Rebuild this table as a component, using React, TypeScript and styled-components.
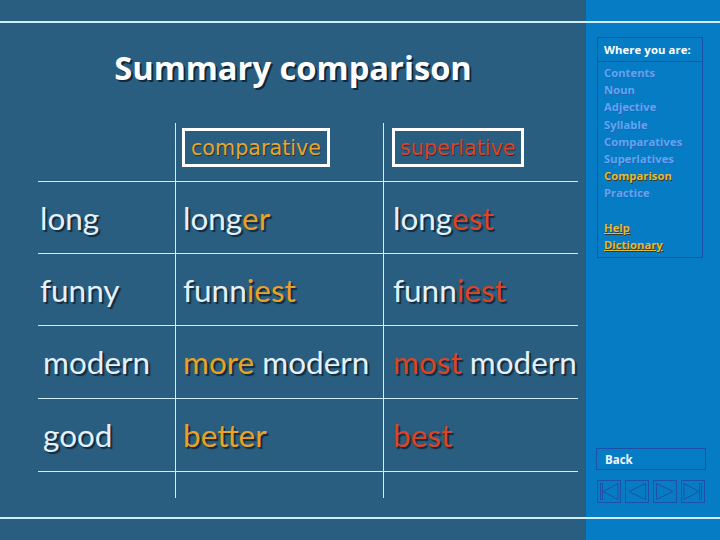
import React from "react";
import styled, { createGlobalStyle } from "styled-components";

const GlobalStyle = createGlobalStyle`
  html, body { margin: 0; padding: 0; background: #2a5e80; }
  body { font-family: "Open Sans", "DejaVu Sans", sans-serif; }
  * { box-sizing: border-box; }
`;

const LINE = "#cdeefa";

const Shell = styled.div`
  width: 720px;
  height: 540px;
  display: flex;
  overflow: hidden;
`;

const Column = styled.div<{ $side?: boolean }>`
  display: flex;
  flex-direction: column;
  width: ${(p) => (p.$side ? "134px" : "586px")};
  background: ${(p) => (p.$side ? "#067cc5" : "#2a5e80")};
`;

const Band = styled.div`
  height: 21px;
  flex: none;
`;

const Body = styled.div`
  height: 498px;
  flex: none;
  border-top: 2px solid ${LINE};
  border-bottom: 2px solid ${LINE};
  display: flex;
  flex-direction: column;
`;

const MainBody = styled(Body)`
  padding-left: 38px;
`;

const Title = styled.h1`
  margin: 25px 0 0 -38px;
  height: 40px;
  line-height: 40px;
  text-align: center;
  font-family: "Open Sans", sans-serif;
  font-weight: 700;
  font-size: 32.7px;
  color: #ffffff;
  text-shadow: 2px 2px 0 #10283a;
`;

const Table = styled.div`
  margin-top: 35px;
  display: grid;
  grid-template-columns: 137px 208px 195px;
  grid-template-rows: 58px 72px 72px 73px 73px 27px;
`;

const PAD = ["2px", "7px", "9px"];

const Cell = styled.div<{ $col: number; $ruled?: boolean; $indent?: number }>`
  display: flex;
  align-items: center;
  white-space: nowrap;
  padding-left: ${(p) => (p.$indent !== undefined ? `${p.$indent}px` : PAD[p.$col])};
  border-left: ${(p) => (p.$col > 0 ? `1px solid ${LINE}` : "none")};
  border-top: ${(p) => (p.$ruled ? `1px solid ${LINE}` : "none")};
  font-family: Lato, "Open Sans", sans-serif;
  font-size: 31.5px;
  color: #e4f1fa;
  text-shadow: 2px 2px 1px rgba(12, 30, 45, 0.8);
`;

const HeadCell = styled.div<{ $col: number }>`
  padding: 5px 0 0 ${(p) => (p.$col === 1 ? "6px" : "8px")};
  border-left: ${(p) => (p.$col > 0 ? `1px solid ${LINE}` : "none")};
`;

const HeadBox = styled.div<{ $tone: "orange" | "red" }>`
  display: inline-flex;
  align-items: center;
  height: 39px;
  padding: 0 ${(p) => (p.$tone === "orange" ? "6px" : "5px")};
  border: 3px solid #ffffff;
  font-family: "DejaVu Sans", sans-serif;
  font-size: 20.7px;
  color: ${(p) => (p.$tone === "orange" ? "#e8a52c" : "#d9452a")};
  text-shadow: 1px 1px 0 rgba(20, 30, 40, 0.7);
`;

const Suffix = styled.span<{ $tone: "orange" | "red" }>`
  color: ${(p) => (p.$tone === "orange" ? "#e9a126" : "#dc4424")};
`;

const SideBody = styled(Body)`
  padding: 14px 0 14px 11px;
`;

const Frame = styled.div`
  width: 106px;
  border: 1px solid #1d50a8;
  display: flex;
  flex-direction: column;
`;

const FrameHead = styled.div`
  height: 24px;
  border-bottom: 1px solid #1d50a8;
  padding-left: 6px;
  display: flex;
  align-items: center;
  font-family: "Open Sans", sans-serif;
  font-weight: 700;
  font-size: 11.3px;
  color: #ffffff;
  letter-spacing: 0.1px;
`;

const LinkList = styled.ul`
  list-style: none;
  margin: 0;
  padding: 2px 0 4px 6px;
`;

const LinkItem = styled.li<{ $kind?: "current" | "help" | "gap" }>`
  height: 17.2px;
  line-height: 17.2px;
  font-family: "Open Sans", sans-serif;
  font-weight: 700;
  font-size: 11.3px;
  color: ${(p) => (p.$kind === "current" || p.$kind === "help" ? "#e3bb3a" : "#5aa8f4")};
  text-decoration: ${(p) => (p.$kind === "help" ? "underline" : "none")};
  text-shadow: ${(p) =>
    p.$kind === "current" || p.$kind === "help" ? "1px 1px 0 #3a3a20" : "1px 1px 0 #2a62b0"};
`;

const Bottom = styled.div`
  margin-top: auto;
  display: flex;
  flex-direction: column;
  gap: 10px;
`;

const BackButton = styled.div`
  width: 110px;
  height: 22px;
  margin-left: -1px;
  border: 1px solid #1d50a8;
  padding-left: 8px;
  display: flex;
  align-items: center;
  font-family: "Open Sans", sans-serif;
  font-weight: 700;
  font-size: 11.5px;
  color: #f2f8ff;
`;

const NavRow = styled.div`
  display: flex;
  gap: 4px;
`;

const NavButton = styled.div`
  width: 24px;
  height: 23px;
  border: 1px solid #1d50a8;
  display: flex;
  align-items: center;
  justify-content: center;
`;

type NavKind = "first" | "prev" | "next" | "last";

const NavIcon = ({ kind }: { kind: NavKind }) => {
  const stroke = "#1d50a8";
  return (
    <svg width="22" height="21" viewBox="0 0 22 21">
      {kind === "first" && (
        <>
          <rect x="2.5" y="2.5" width="2" height="16" fill="none" stroke={stroke} />
          <polygon points="20,2.5 5,10.5 20,18.5" fill="none" stroke={stroke} />
        </>
      )}
      {kind === "prev" && <polygon points="19.5,2.5 3,10.5 19.5,18.5" fill="none" stroke={stroke} />}
      {kind === "next" && <polygon points="2.5,2.5 19,10.5 2.5,18.5" fill="none" stroke={stroke} />}
      {kind === "last" && (
        <>
          <polygon points="2,2.5 17,10.5 2,18.5" fill="none" stroke={stroke} />
          <rect x="17.5" y="2.5" width="2" height="16" fill="none" stroke={stroke} />
        </>
      )}
    </svg>
  );
};

type Row = { base: string; indent: number; comp: [string, string]; sup: [string, string]; prefix?: boolean };

const rows: Row[] = [
  { base: "long", indent: 2, comp: ["long", "er"], sup: ["long", "est"] },
  { base: "funny", indent: 2, comp: ["funn", "iest"], sup: ["funn", "iest"] },
  { base: "modern", indent: 5, comp: ["more", " modern"], sup: ["most", " modern"], prefix: true },
  { base: "good", indent: 5, comp: ["", "better"], sup: ["", "best"] },
];

const Word = ({ parts, tone, prefix }: { parts: [string, string]; tone: "orange" | "red"; prefix?: boolean }) =>
  prefix ? (
    <span>
      <Suffix $tone={tone}>{parts[0]}</Suffix>
      {parts[1]}
    </span>
  ) : (
    <span>
      {parts[0]}
      <Suffix $tone={tone}>{parts[1]}</Suffix>
    </span>
  );

const links: { label: string; kind?: "current" | "help" | "gap" }[] = [
  { label: "Contents" },
  { label: "Noun" },
  { label: "Adjective" },
  { label: "Syllable" },
  { label: "Comparatives" },
  { label: "Superlatives" },
  { label: "Comparison", kind: "current" },
  { label: "Practice" },
  { label: "", kind: "gap" },
  { label: "Help", kind: "help" },
  { label: "Dictionary", kind: "help" },
];

export default function App() {
  return (
    <>
      <GlobalStyle />
      <Shell>
        <Column>
          <Band />
          <MainBody>
            <Title>Summary comparison</Title>
            <Table>
              <HeadCell $col={0} />
              <HeadCell $col={1}>
                <HeadBox $tone="orange">comparative</HeadBox>
              </HeadCell>
              <HeadCell $col={2}>
                <HeadBox $tone="red">superlative</HeadBox>
              </HeadCell>
              {rows.map((r) => (
                <React.Fragment key={r.base}>
                  <Cell $col={0} $ruled $indent={r.indent}>
                    {r.base}
                  </Cell>
                  <Cell $col={1} $ruled>
                    <Word parts={r.comp} tone="orange" prefix={r.prefix} />
                  </Cell>
                  <Cell $col={2} $ruled>
                    <Word parts={r.sup} tone="red" prefix={r.prefix} />
                  </Cell>
                </React.Fragment>
              ))}
              <Cell $col={0} $ruled />
              <Cell $col={1} $ruled />
              <Cell $col={2} $ruled />
            </Table>
          </MainBody>
          <Band />
        </Column>
        <Column $side>
          <Band />
          <SideBody>
            <Frame>
              <FrameHead>Where you are:</FrameHead>
              <LinkList>
                {links.map((l, i) => (
                  <LinkItem key={i} $kind={l.kind}>
                    {l.label}
                  </LinkItem>
                ))}
              </LinkList>
            </Frame>
            <Bottom>
              <BackButton>Back</BackButton>
              <NavRow>
                {(["first", "prev", "next", "last"] as NavKind[]).map((k) => (
                  <NavButton key={k}>
                    <NavIcon kind={k} />
                  </NavButton>
                ))}
              </NavRow>
            </Bottom>
          </SideBody>
          <Band />
        </Column>
      </Shell>
    </>
  );
}
